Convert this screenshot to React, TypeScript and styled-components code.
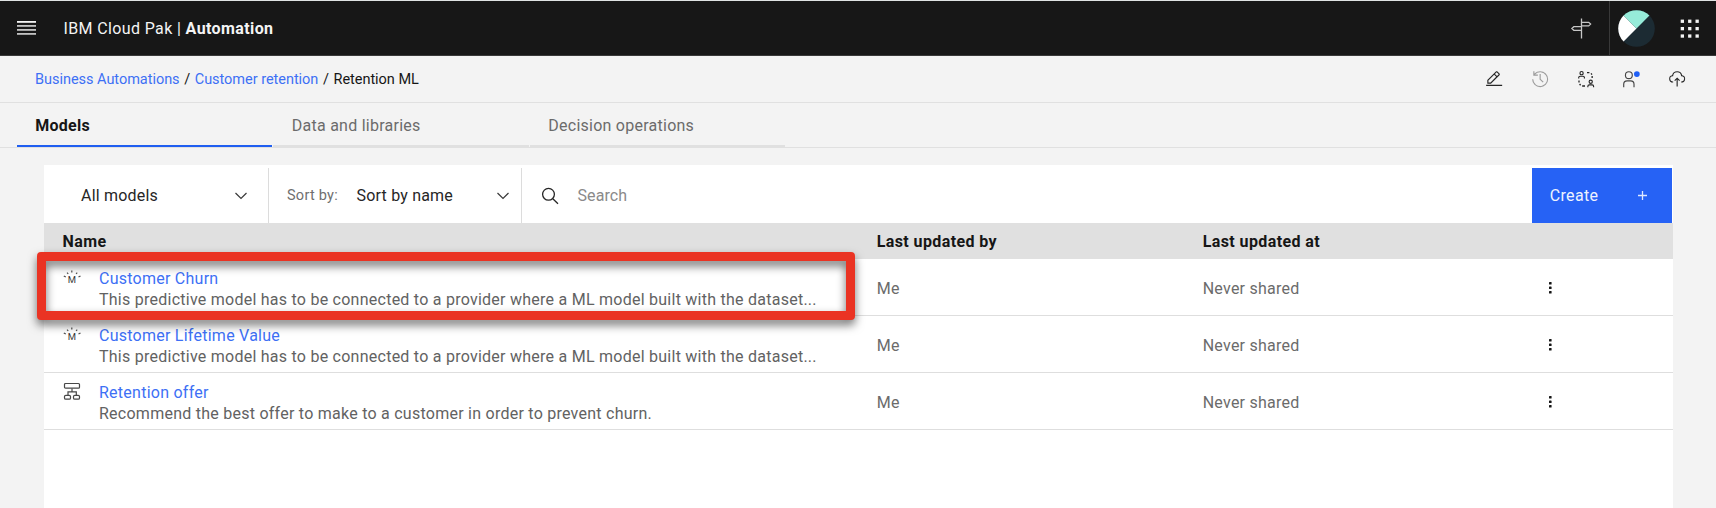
import React from "react";
import styled, { createGlobalStyle } from "styled-components";

const GlobalStyle = createGlobalStyle`
  *, *::before, *::after { box-sizing: border-box; }
  body {
    margin: 0;
    background: #f3f3f3;
    color: #161616;
    font-family: Roboto, "Liberation Sans", sans-serif;
    font-size: 16px;
    line-height: 21px;
    letter-spacing: 0.25px;
  }
  svg { display: block; flex: none; }
`;

const Page = styled.div`
  display: flex;
  flex-direction: column;
  height: 508px;
  overflow: hidden;
`;

const Header = styled.header`
  display: flex;
  align-items: center;
  height: 56px;
  padding-left: 17px;
  background: #171717;
  border-top: 1px solid #dfe3e3;
  border-bottom: 1px solid #393939;
  color: #f4f4f4;
`;

const Product = styled.div`
  flex: 1;
  padding: 1px 0 0 27.5px;
  letter-spacing: 0.37px;
  white-space: pre;
`;

const ProductName = styled.strong`
  font-weight: 700;
  letter-spacing: 0.39px;
`;

const HeaderAction = styled.div<{ $width: number; $divided?: boolean }>`
  display: flex;
  align-items: center;
  justify-content: center;
  width: ${(p) => p.$width}px;
  height: 100%;
  border-left: ${(p) => (p.$divided ? "1px solid #393939" : "none")};
`;

const CrumbBar = styled.div`
  display: flex;
  align-items: center;
  height: 47px;
  padding: 0 16px 0 35px;
  border-bottom: 1px solid #e0e0e0;
  font-size: 14.5px;
`;

const Crumbs = styled.nav`
  display: flex;
  flex: 1;
  gap: 4.6px;
  letter-spacing: -0.03px;
`;

const CrumbLink = styled.a`
  color: #3d70f5;
`;

const Tool = styled.button<{ $faded?: boolean }>`
  display: flex;
  align-items: center;
  justify-content: center;
  width: 45.7px;
  padding: 0;
  border: 0;
  background: none;
  color: ${(p) => (p.$faded ? "#9c9c9c" : "#262626")};
`;

const Tabs = styled.nav`
  display: flex;
  gap: 1.2px;
  height: 45px;
  padding-left: 17px;
  border-bottom: 1px solid #e0e0e0;
`;

const Tab = styled.a<{ $active?: boolean }>`
  display: flex;
  align-items: center;
  width: 255.3px;
  padding: 3px 0 0 18.3px;
  border-bottom: 2px solid ${(p) => (p.$active ? "#1f5ef0" : "#e0e0e0")};
  color: ${(p) => (p.$active ? "#161616" : "#6b6b6b")};
  font-weight: ${(p) => (p.$active ? 700 : 400)};
`;

const Panel = styled.main`
  position: relative;
  flex: 1;
  margin: 17px 43.5px 0 44px;
  padding-top: 3px;
  background: #fff;
`;

const Toolbar = styled.div`
  display: flex;
  height: 55px;
  padding-right: 1px;
`;

const Dropdown = styled.div<{ $width: number; $indent: number; $end: number }>`
  display: flex;
  align-items: center;
  width: ${(p) => p.$width}px;
  padding: 0 ${(p) => p.$end}px 0 ${(p) => p.$indent}px;
  border-right: 1px solid #dcdcdc;
`;

const DropdownLabel = styled.span`
  width: 69.5px;
  color: #6f6f6f;
  font-size: 14.5px;
`;

const DropdownValue = styled.span`
  flex: 1;
  color: #262626;
  letter-spacing: 0.2px;
`;

const SearchField = styled.div`
  display: flex;
  flex: 1;
  align-items: center;
  gap: 18.8px;
  padding-left: 18.7px;
  color: #8a8a8a;
  letter-spacing: 0.1px;
`;

const CreateButton = styled.button`
  display: flex;
  align-items: center;
  justify-content: space-between;
  width: 139.5px;
  padding: 0 24.5px 0 17.8px;
  border: 0;
  background: #2662f5;
  color: #eef3ff;
  font: inherit;
  letter-spacing: 0.32px;
`;

const Row = styled.div`
  display: grid;
  grid-template-columns: 814.2px 326px 346px 1fr;
  height: 57px;
  padding-left: 18.5px;
  border-bottom: 1px solid #dedede;
`;

const HeadRow = styled(Row)`
  align-items: center;
  height: 36px;
  border-bottom: 0;
  background: #e0e0e0;
  font-weight: 700;
  letter-spacing: 0.4px;
`;

const NameCell = styled.div`
  display: flex;
  padding-top: 9px;
`;

const RowIcon = styled.span`
  width: 36.5px;
`;

const ModelLink = styled.a`
  display: block;
  color: #3d70f5;
`;

const Description = styled.p`
  margin: 0;
  color: #626262;
`;

const Cell = styled.div`
  display: flex;
  align-items: center;
  padding-top: 2px;
  color: #6b6b6b;
`;

const Highlight = styled.div`
  position: absolute;
  top: 87px;
  left: -7px;
  width: 818px;
  height: 68px;
  border: 9px solid #ea3323;
  border-radius: 4px;
  filter: drop-shadow(0 5px 5px rgba(0, 0, 0, 0.55));
  pointer-events: none;
`;

const MenuIcon = () => (
  <svg width="19" height="14">
    {[0, 4, 8, 12].map((y) => (
      <rect key={y} y={y} width="19" height="1.8" fill={y === 0 ? "#f4f4f4" : "#c2c2c2"} />
    ))}
  </svg>
);

const SignpostIcon = () => (
  <svg width="22" height="22" fill="none" stroke="#c6c6c6" strokeWidth="1.3">
    <path d="M11.500 1.500v20M11.500 5.300h7.200l1.900 1.800-1.900 1.800h-7.200zM11.500 9.700H3.800L1.900 11.500l1.900 1.800h7.700z" />
  </svg>
);

const Avatar = () => (
  <svg width="37" height="37" viewBox="0 0 37 37">
    <circle cx="18.5" cy="18.5" r="18.3" fill="#1c2b33" />
    <path d="M18.5 18.5 5.56 31.44A18.3 18.3 0 0 1 5.56 5.56z" fill="#fff" />
    <path d="M18.5 18.5 5.56 5.56a18.3 18.3 0 0 1 25.88 0z" fill="#96ebd9" />
  </svg>
);

const AppsIcon = () => (
  <svg width="19" height="19" fill="#f4f4f4">
    {[0, 7.4, 14.8].map((y) =>
      [0, 7.4, 14.8].map((x) => <rect key={`${x}-${y}`} x={x + 0.7} y={y + 0.6} width="3.3" height="3.3" />)
    )}
  </svg>
);

const EditIcon = () => (
  <svg width="18.3" height="18.3" viewBox="0 0 32 32" fill="currentColor">
    <path d="M2 26h28v2H2zM25.4 9c.8-.8.8-2 0-2.8l-3.6-3.6c-.8-.8-2-.8-2.8 0l-15 15V24h6.4l15-15zm-5-5L24 7.6l-3 3L17.4 7l3-3zM6 22v-3.6l10-10 3.6 3.6-10 10H6z" />
  </svg>
);

const HistoryIcon = () => (
  <svg width="18.3" height="18.3" viewBox="0 0 32 32" fill="currentColor">
    <path d="M20.59 22 15 16.41V7h2v8.58l5 5.01L20.59 22z" />
    <path d="M16 2A13.94 13.94 0 0 0 6 6.23V2H4v8h8V8H7.08A12 12 0 1 1 4 16H2A14 14 0 1 0 16 2z" />
  </svg>
);

const SwapUsersIcon = () => (
  <svg width="18.3" height="18.3" viewBox="0 0 32 32" fill="none" stroke="currentColor" strokeWidth="2">
    <circle cx="8" cy="5.5" r="2.8" />
    <path d="M3 15v-1.500A2.500 2.500 0 0 1 5.500 11h5a2.500 2.500 0 0 1 2.500 2.500V15" />
    <circle cx="24" cy="20.500" r="2.800" />
    <path d="M19 30v-1.500a2.500 2.500 0 0 1 2.500-2.500h5a2.500 2.500 0 0 1 2.500 2.500V30" />
    <path strokeWidth="2.300" d="M17.500 4.500h4.200M24.500 5.800l1.700 2.200M26.500 10.500V14M3.500 18.500V22M4.500 24.500l1.800 2.200M9 28h5" />
  </svg>
);

const UserIcon = () => (
  <svg width="18.3" height="18.3" viewBox="0 0 32 32" fill="currentColor" fillOpacity="0.85">
    <path d="M12 4a5 5 0 1 1-5 5 5 5 0 0 1 5-5m0-2a7 7 0 1 0 7 7 7 7 0 0 0-7-7zM22 30h-2v-5a5 5 0 0 0-5-5H9a5 5 0 0 0-5 5v5H2v-5a7 7 0 0 1 7-7h6a7 7 0 0 1 7 7z" />
    <circle cx="26" cy="7.2" r="5" fill="#1f5ff5" fillOpacity="1" />
  </svg>
);

const CloudUploadIcon = () => (
  <svg width="18.3" height="18.3" viewBox="0 0 32 32" fill="currentColor">
    <path d="m11 18 1.41 1.41L15 16.83V29h2V16.83l2.59 2.58L21 18l-5-5-5 5z" />
    <path d="M23.5 22H23v-2h.5a4.5 4.5 0 0 0 .36-9H23l-.1-.82a7 7 0 0 0-13.88 0L9 11h-.86a4.5 4.5 0 0 0 .36 9H9v2h-.5A6.5 6.5 0 0 1 7.2 9.14a9 9 0 0 1 17.6 0A6.5 6.5 0 0 1 23.5 22z" />
  </svg>
);

const Chevron = () => (
  <svg width="14" height="10" fill="none" stroke="#393939" strokeWidth="1.2">
    <path d="m1.500 2 5.500 5.500L12.500 2" />
  </svg>
);

const SearchIcon = () => (
  <svg width="18" height="18" fill="none" stroke="#262626" strokeWidth="1.3">
    <circle cx="7.500" cy="7.300" r="5.900" />
    <path d="m11.800 11.700 5.200 5.100" />
  </svg>
);

const PlusIcon = () => (
  <svg width="9" height="9" stroke="#dfe8ff" strokeWidth="1.3">
    <path d="M4.500 0v9M0 4.500h9" />
  </svg>
);

const PredictiveIcon = () => (
  <svg width="20" height="18" fill="#393939" stroke="#525252" strokeWidth="1.2">
    <path d="m.8 7.900 2 1.200M4.100 4.600l1.100 1.400M8.800 2.600v2M13.100 6l1.100-1.400M15.500 9.100l2-1.200" />
    <text x="9" y="15.300" textAnchor="middle" fontSize="9.500" fontWeight="400" letterSpacing="0" stroke="none">
      M
    </text>
  </svg>
);

const DecisionIcon = () => (
  <svg width="20" height="20" fill="none" stroke="#484848" strokeWidth="1.2">
    <rect x="1.500" y="1.500" width="15" height="4.700" rx="1" />
    <path d="M9 6.500v3.300M5 13.500V9.800h8.300v3.700" />
    <rect x="1.500" y="13.300" width="6" height="3.900" rx="1.300" />
    <rect x="10.500" y="13.300" width="6" height="3.900" rx="1.300" />
  </svg>
);

const OverflowIcon = () => (
  <svg width="4" height="14" fill="#161616">
    {[1, 5.5, 10].map((y) => (
      <rect key={y} x="0" y={y} width="2.6" height="2.6" rx="0.6" />
    ))}
  </svg>
);

const predictiveText =
  "This predictive model has to be connected to a provider where a ML model built with the dataset...";

const models = [
  { name: "Customer Churn", text: predictiveText, Icon: PredictiveIcon },
  { name: "Customer Lifetime Value", text: predictiveText, Icon: PredictiveIcon },
  {
    name: "Retention offer",
    text: "Recommend the best offer to make to a customer in order to prevent churn.",
    Icon: DecisionIcon,
  },
];

export default function App() {
  return (
    <>
      <GlobalStyle />
      <Page>
        <Header>
          <MenuIcon />
          <Product>
            IBM Cloud Pak | <ProductName>Automation</ProductName>
          </Product>
          <HeaderAction $width={55.5}>
            <SignpostIcon />
          </HeaderAction>
          <HeaderAction $width={54} $divided>
            <Avatar />
          </HeaderAction>
          <HeaderAction $width={53}>
            <AppsIcon />
          </HeaderAction>
        </Header>

        <CrumbBar>
          <Crumbs>
            <CrumbLink>Business Automations</CrumbLink>
            <span>/</span>
            <CrumbLink>Customer retention</CrumbLink>
            <span>/</span>
            <span>Retention ML</span>
          </Crumbs>
          <Tool><EditIcon /></Tool>
          <Tool $faded><HistoryIcon /></Tool>
          <Tool><SwapUsersIcon /></Tool>
          <Tool><UserIcon /></Tool>
          <Tool><CloudUploadIcon /></Tool>
        </CrumbBar>

        <Tabs>
          <Tab $active>Models</Tab>
          <Tab>Data and libraries</Tab>
          <Tab>Decision operations</Tab>
        </Tabs>

        <Panel>
          <Toolbar>
            <Dropdown $width={225} $indent={37} $end={20}>
              <DropdownValue>All models</DropdownValue>
              <Chevron />
            </Dropdown>
            <Dropdown $width={253} $indent={18} $end={11}>
              <DropdownLabel>Sort by:</DropdownLabel>
              <DropdownValue>Sort by name</DropdownValue>
              <Chevron />
            </Dropdown>
            <SearchField>
              <SearchIcon />
              Search
            </SearchField>
            <CreateButton>
              Create
              <PlusIcon />
            </CreateButton>
          </Toolbar>

          <HeadRow>
            <span>Name</span>
            <span>Last updated by</span>
            <span>Last updated at</span>
          </HeadRow>
          {models.map(({ name, text, Icon }) => (
            <Row key={name}>
              <NameCell>
                <RowIcon>
                  <Icon />
                </RowIcon>
                <div>
                  <ModelLink>{name}</ModelLink>
                  <Description>{text}</Description>
                </div>
              </NameCell>
              <Cell>Me</Cell>
              <Cell>Never shared</Cell>
              <Cell>
                <OverflowIcon />
              </Cell>
            </Row>
          ))}
          <Highlight />
        </Panel>
      </Page>
    </>
  );
}
